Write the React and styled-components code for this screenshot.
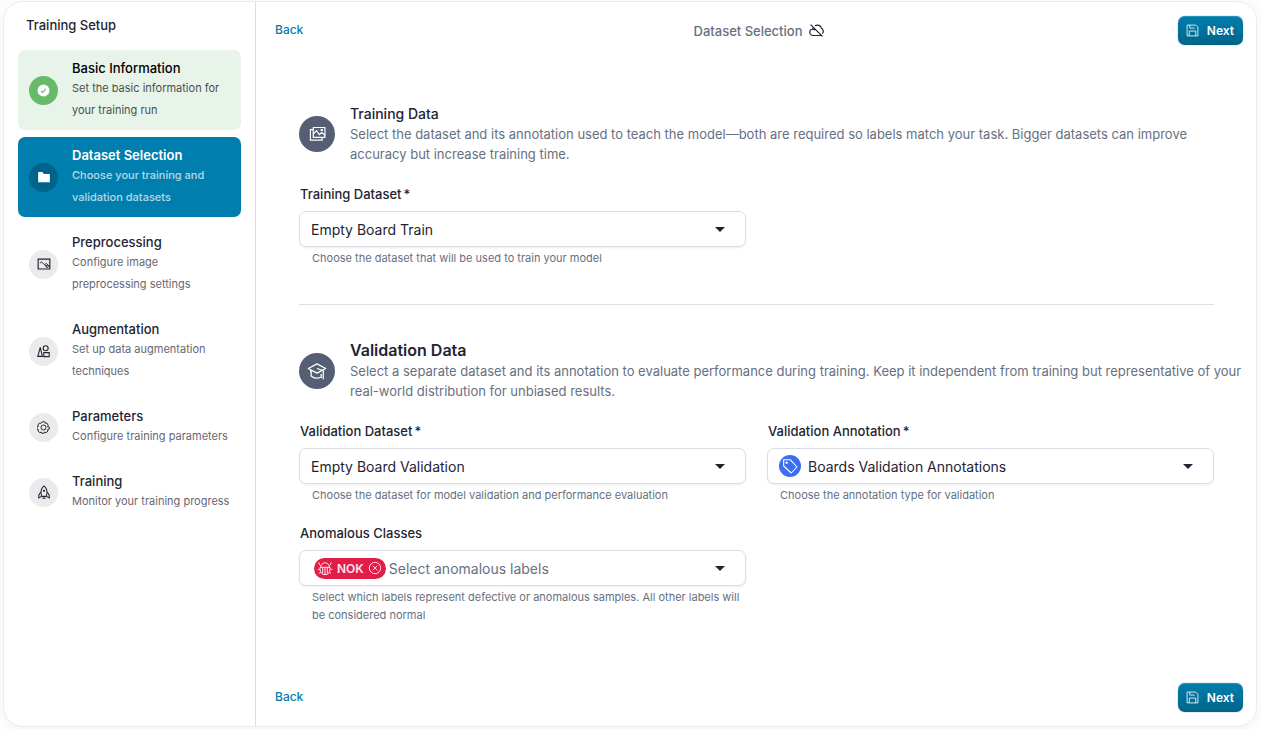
import React, { useState } from "react";
import styled, { createGlobalStyle, ThemeProvider } from "styled-components";

const theme = {
  primary: "#007ead",
  primaryDark: "#00648a",
  text: "#1e2433",
  textMuted: "#667080",
  slate: "#565e74",
  border: "#dcdde3",
  success: "#66bb6a",
  successBg: "#e8f4e9",
  danger: "#e11d48",
  info: "#3b6ff0",
};

const GlobalStyle = createGlobalStyle`
  *, *::before, *::after {
    box-sizing: border-box;
  }
  body {
    margin: 0;
    background: #fcfcfc;
    font-family: Inter, "Open Sans", sans-serif;
    color: ${theme.text};
  }
  button, select {
    font-family: inherit;
  }
`;

const Page = styled.div`
  display: flex;
  min-height: 100vh;
  padding: 1px 4px 2px 3px;
`;

const Card = styled.div`
  display: flex;
  flex: 1;
  overflow: hidden;
  background: #fff;
  border: 1px solid #ececee;
  border-radius: 20px;
  box-shadow: 0 2px 6px rgba(0, 0, 0, 0.03);
`;

const Sidebar = styled.aside`
  flex: 0 0 252px;
  padding: 12px 14px;
  border-right: 1px solid #dedede;
`;

const SidebarTitle = styled.h1`
  margin: 0 0 14px;
  padding: 0 8px;
  font-size: 13px;
  font-weight: 500;
  line-height: 22px;
`;

const StepList = styled.ol`
  display: flex;
  flex-direction: column;
  gap: 7px;
  margin: 0;
  padding: 0;
  list-style: none;
`;

const stepBg = { done: theme.successBg, active: theme.primary, todo: "transparent" };
const badgeBg = { done: theme.success, active: theme.primaryDark, todo: "#ebebeb" };

const StepButton = styled.button`
  display: flex;
  align-items: center;
  gap: 14px;
  width: 100%;
  padding: 9px 11px;
  border: 0;
  border-radius: 7px;
  background: ${({ $status }) => stepBg[$status]};
  color: ${({ $status }) =>
    $status === "active" ? "#fff" : $status === "done" ? "#000" : theme.text};
  text-align: left;
  cursor: pointer;
`;

const StepBadge = styled.span`
  display: flex;
  align-items: center;
  justify-content: center;
  flex: 0 0 29px;
  height: 29px;
  border-radius: 50%;
  background: ${({ $status }) => badgeBg[$status]};
  color: ${({ $status }) => ($status === "todo" ? theme.text : "#fff")};
`;

const StepText = styled.span`
  display: flex;
  flex-direction: column;
`;

const StepName = styled.span`
  font-size: 13px;
  font-weight: ${({ $status }) => ($status === "active" ? 600 : 500)};
  line-height: 18px;
`;

const StepDescription = styled.span`
  font-size: 11px;
  font-weight: ${({ $status }) => ($status === "active" ? 500 : 400)};
  line-height: 22px;
  opacity: 0.7;
`;

const Main = styled.main`
  display: flex;
  flex: 1;
  flex-direction: column;
  min-width: 0;
`;

const Toolbar = styled.div`
  display: grid;
  grid-template-columns: 1fr auto 1fr;
  align-items: center;
  padding: 14px 13px 14px 19px;
`;

const ToolbarTitle = styled.h2`
  display: flex;
  align-items: center;
  gap: 7px;
  margin: 0;
  font-size: 13px;
  font-weight: 500;
  color: ${theme.textMuted};

  svg {
    color: ${theme.text};
  }
`;

const BackButton = styled.button`
  justify-self: start;
  padding: 0 0 2px;
  border: 0;
  background: none;
  color: ${theme.primary};
  font-size: 12px;
  font-weight: 500;
  line-height: 22px;
  cursor: pointer;
`;

const NextButton = styled.button`
  display: flex;
  grid-column: 3;
  align-items: center;
  justify-self: end;
  gap: 8px;
  height: 29px;
  padding: 0 9px 1px 8px;
  border: 0;
  border-radius: 7px;
  background: linear-gradient(${theme.primary}, ${theme.primaryDark});
  box-shadow: inset 0 1px 0 rgba(255, 255, 255, 0.15), 0 0 1px ${theme.primaryDark};
  color: #fff;
  font-size: 12px;
  font-weight: 600;
  cursor: pointer;

  svg {
    opacity: 0.85;
  }
`;

const Content = styled.div`
  flex: 1;
  padding: 44px 42px 0 43px;
`;

const SectionHeader = styled.header`
  display: flex;
  align-items: center;
  gap: 15px;
`;

const SectionBadge = styled.span`
  display: flex;
  align-items: center;
  justify-content: center;
  flex: 0 0 36px;
  height: 36px;
  border-radius: 50%;
  background: ${theme.slate};
  color: #fff;
`;

const SectionTitle = styled.h3`
  margin: 0;
  font-size: ${({ $large }) => ($large ? 16 : 14)}px;
  font-weight: ${({ $large }) => ($large ? 600 : 500)};
  line-height: 21px;
`;

const SectionDescription = styled.p`
  margin: 0 -32px 0 0;
  font-size: 13px;
  line-height: 20px;
  color: ${theme.textMuted};
`;

const Divider = styled.hr`
  height: 1px;
  margin: 37px 0 35px;
  border: 0;
  background: #dfdfe1;
`;

const FieldGrid = styled.div`
  display: grid;
  grid-template-columns: 1fr 1fr;
  gap: 19px 21px;
  margin-top: 20px;
`;

const Field = styled.div`
  display: flex;
  flex-direction: column;
`;

const Label = styled.label`
  margin-bottom: 7px;
  padding-left: 1px;
  font-size: 13px;
  font-weight: 500;
  line-height: 20px;
`;

const Required = styled.span`
  margin-left: 2px;
`;

const Control = styled.div`
  display: flex;
  align-items: center;
  gap: ${({ $gap }) => $gap || 0}px;
  height: 36px;
  padding: 0 20px 0 ${({ $inset }) => $inset || 11}px;
  border: 1px solid ${theme.border};
  border-radius: 7px;
  background: #fff;
  box-shadow: 0 1px 2px rgba(30, 36, 51, 0.08);

  &:focus-within {
    border-color: ${theme.primary};
  }
`;

const Select = styled.select`
  flex: 1;
  min-width: 0;
  height: 100%;
  padding: 0;
  border: 0;
  outline: 0;
  appearance: none;
  background: transparent;
  color: ${({ $placeholder }) => ($placeholder ? theme.textMuted : theme.text)};
  font-size: 14px;
`;

const Helper = styled.p`
  margin: 2px 4px 0 13px;
  font-size: 11px;
  line-height: 18px;
  color: ${theme.textMuted};
`;

const TagBadge = styled.span`
  display: flex;
  align-items: center;
  justify-content: center;
  width: 22px;
  height: 22px;
  border-radius: 50%;
  background: ${theme.info};
  color: #fff;
`;

const Chip = styled.span`
  display: flex;
  align-items: center;
  gap: 4px;
  height: 21px;
  padding: 0 4px 0 3px;
  border-radius: 11px;
  background: ${theme.danger};
  color: #ffe4ea;
  font-size: 12px;
  font-weight: 600;
`;

const ChipRemove = styled.button`
  display: flex;
  padding: 0;
  border: 0;
  background: none;
  color: inherit;
  cursor: pointer;
`;

const Icon = ({ size = 14, width = 1.5, children }) => (
  <svg
    width={size}
    height={size}
    viewBox="0 0 24 24"
    fill="none"
    stroke="currentColor"
    strokeWidth={width}
    aria-hidden="true"
  >
    {children}
  </svg>
);

const CheckIcon = () => (
  <Icon size={13}>
    <circle cx="12" cy="12" r="11" fill="currentColor" stroke="none" />
    <path d="M7.5 12.5l3 3 6-6.5" stroke={theme.success} strokeWidth="2" />
  </Icon>
);

const FolderIcon = () => (
  <Icon size={14}>
    <path d="M2 3.5h7l3 3.5h10V21H2z" fill="currentColor" stroke="none" />
  </Icon>
);

const ImageIcon = () => (
  <Icon size={14} width={2}>
    <path d="M2 3.5h20v17H2z" />
    <path d="M5 10.500l3-2 9 8.500M13 13l3-2 6 6" strokeWidth="1.600" />
    <circle cx="17.500" cy="16" r="2" strokeWidth="1.600" />
  </Icon>
);

const ShapesIcon = () => (
  <Icon size={13} width={2}>
    <circle cx="16" cy="6" r="4.6" />
    <path d="M6 4.5L10 21H1.5zM12.500 14H22.500V21.500H12.500z" />
  </Icon>
);

const GearIcon = () => (
  <Icon size={13} width={1.8}>
    <circle cx="12" cy="12" r="4.6" />
    <path
      d="M9.500 1.500h5l.9 2.700 2.800-.4 2.500 4.200-1.500 2.200 3.300 1v3.800l-3.200 1.200.9 2.600-3.800 3-2.300-1.500-1.300 2.400h-3.600l-1.500-2.400-2.400 1.300-3.500-3.200.9-2.400-3-1.200v-3.800l3-1-1.200-2.400 2.800-3.800 2.800.6z"
      strokeLinejoin="round"
    />
  </Icon>
);

const RocketIcon = () => (
  <Icon size={14} width={1.8}>
    <path d="M8 19.500C5 13 7.500 5 12 1.500 16.500 5 19 13 16 19.500z" strokeLinejoin="round" />
    <path d="M6.500 12L3 17.500V22l5-2.500M17.500 12l3.500 5.500V22l-5-2.500M9.500 22.500h5" />
    <circle cx="12" cy="10" r="1" />
  </Icon>
);

const CloudOffIcon = () => (
  <Icon size={15} width={1.9}>
    <path d="M2.5 2.5l19 19M6.8 6.8C6 8 6 9 6 10c-3 0-4.800 2-4.800 4.500S3.200 20 6.500 20h13M9.500 4.500C14 2 19 4 20 8.500c3 1.500 3.800 5.500 1.500 8.500M6 10c1.500 0 2.600.5 3.500 1.400" />
  </Icon>
);

const SaveIcon = () => (
  <Icon size={13} width={1.8}>
    <path d="M2 2h16l4 4v16H2z" strokeLinejoin="round" />
    <path d="M7 2v5.500h9M6 22v-9h12v9" />
  </Icon>
);

const ImagesIcon = () => (
  <Icon size={17} width={1.7}>
    <path d="M6 3.500h16.500v14H6z" strokeLinejoin="round" />
    <path d="M6 6.500H2v14.800h16.500v-3.800M6 13l4.500-5 4 5.500 3.500-3 4.500 4" />
    <circle cx="18" cy="7" r="1" />
  </Icon>
);

const GraduationIcon = () => (
  <Icon size={20} width={1.5}>
    <path d="M12 3.5L1.5 9 12 14.5 22.5 9z" strokeLinejoin="round" />
    <path d="M5 11v7c3.500 3.300 9.500 3.300 12.500 1M12 9l7.500 2.500V22M17 15.500v5M4 10.500l1 4" />
  </Icon>
);

const TagIcon = () => (
  <Icon size={16} width={1.6}>
    <path d="M2.5 2.5h9.800L22.500 13.500l-8.700 9L2.500 12z" strokeLinejoin="round" />
    <circle cx="7" cy="7" r="1" />
  </Icon>
);

const BugIcon = () => (
  <Icon size={16} width={1.5}>
    <path d="M4.500 11h15v3c0 5-3.300 8-7.500 8s-7.500-3-7.500-8zM5.500 11C5.500 2 18.500 2 18.500 11M12 11v11M8.500 11v9M15.500 11v9" />
    <path d="M4.500 14H1M19.500 14H23M5.500 8.500L3 6V3.500M18.500 8.500L21 6V3.500M5.500 18L3 20.500M18.500 18l2.500 2.500" />
  </Icon>
);

const RemoveIcon = () => (
  <Icon size={14} width={1.6}>
    <circle cx="12" cy="12" r="9.8" />
    <path d="M8 8l8 8M16 8l-8 8" />
  </Icon>
);

const Caret = () => (
  <svg width="10" height="5" viewBox="0 0 10 5" aria-hidden="true">
    <path d="M0 0h10L5 5z" fill={theme.text} />
  </svg>
);

const steps = [
  { name: "Basic Information", description: "Set the basic information for your training run", status: "done", icon: CheckIcon },
  { name: "Dataset Selection", description: "Choose your training and validation datasets", status: "active", icon: FolderIcon },
  { name: "Preprocessing", description: "Configure image preprocessing settings", status: "todo", icon: ImageIcon },
  { name: "Augmentation", description: "Set up data augmentation techniques", status: "todo", icon: ShapesIcon },
  { name: "Parameters", description: "Configure training parameters", status: "todo", icon: GearIcon },
  { name: "Training", description: "Monitor your training progress", status: "todo", icon: RocketIcon },
];

const Next = () => (
  <NextButton type="button">
    <SaveIcon />
    Next
  </NextButton>
);

const SelectField = ({ id, label, required, helper, options, placeholder, before, gap, inset }) => (
  <Field>
    <Label htmlFor={id}>
      {label}
      {required && <Required>*</Required>}
    </Label>
    <Control $gap={gap} $inset={inset}>
      {before}
      <Select id={id} required={required} $placeholder={placeholder} aria-describedby={`${id}-help`}>
        {options.map((option) => (
          <option key={option}>{option}</option>
        ))}
      </Select>
      <Caret />
    </Control>
    <Helper id={`${id}-help`}>{helper}</Helper>
  </Field>
);

const App = () => {
  const [classes, setClasses] = useState(["NOK"]);

  return (
    <ThemeProvider theme={theme}>
      <GlobalStyle />
      <Page>
        <Card>
          <Sidebar>
            <SidebarTitle>Training Setup</SidebarTitle>
            <StepList>
              {steps.map(({ name, description, status, icon: StepIcon }) => (
                <li key={name}>
                  <StepButton type="button" $status={status} aria-current={status === "active" ? "step" : undefined}>
                    <StepBadge $status={status}>
                      <StepIcon />
                    </StepBadge>
                    <StepText>
                      <StepName $status={status}>{name}</StepName>
                      <StepDescription $status={status}>{description}</StepDescription>
                    </StepText>
                  </StepButton>
                </li>
              ))}
            </StepList>
          </Sidebar>

          <Main>
            <Toolbar>
              <BackButton type="button">Back</BackButton>
              <ToolbarTitle>
                Dataset Selection
                <CloudOffIcon />
              </ToolbarTitle>
              <Next />
            </Toolbar>

            <Content>
              <section>
                <SectionHeader>
                  <SectionBadge>
                    <ImagesIcon />
                  </SectionBadge>
                  <div>
                    <SectionTitle>Training Data</SectionTitle>
                    <SectionDescription>
                      Select the dataset and its annotation used to teach the model—both are required so
                      labels match your task. Bigger datasets can improve
                      <br />
                      accuracy but increase training time.
                    </SectionDescription>
                  </div>
                </SectionHeader>
                <FieldGrid>
                  <SelectField
                    id="training-dataset"
                    label="Training Dataset"
                    required
                    options={["Empty Board Train"]}
                    helper="Choose the dataset that will be used to train your model"
                  />
                </FieldGrid>
              </section>

              <Divider />

              <section>
                <SectionHeader>
                  <SectionBadge>
                    <GraduationIcon />
                  </SectionBadge>
                  <div>
                    <SectionTitle $large>Validation Data</SectionTitle>
                    <SectionDescription>
                      Select a separate dataset and its annotation to evaluate performance during training.
                      Keep it independent from training but representative of your
                      <br />
                      real-world distribution for unbiased results.
                    </SectionDescription>
                  </div>
                </SectionHeader>
                <FieldGrid>
                  <SelectField
                    id="validation-dataset"
                    label="Validation Dataset"
                    required
                    options={["Empty Board Validation"]}
                    helper="Choose the dataset for model validation and performance evaluation"
                  />
                  <SelectField
                    id="validation-annotation"
                    label="Validation Annotation"
                    required
                    options={["Boards Validation Annotations"]}
                    helper="Choose the annotation type for validation"
                    gap={7}
                    before={
                      <TagBadge>
                        <TagIcon />
                      </TagBadge>
                    }
                  />
                  <SelectField
                    id="anomalous-classes"
                    label="Anomalous Classes"
                    options={["Select anomalous labels"]}
                    placeholder
                    helper="Select which labels represent defective or anomalous samples. All other labels will be considered normal"
                    gap={3}
                    inset={14}
                    before={classes.map((name) => (
                      <Chip key={name}>
                        <BugIcon />
                        {name}
                        <ChipRemove
                          type="button"
                          aria-label={`Remove ${name}`}
                          onClick={() => setClasses(classes.filter((c) => c !== name))}
                        >
                          <RemoveIcon />
                        </ChipRemove>
                      </Chip>
                    ))}
                  />
                </FieldGrid>
              </section>
            </Content>

            <Toolbar>
              <BackButton type="button">Back</BackButton>
              <Next />
            </Toolbar>
          </Main>
        </Card>
      </Page>
    </ThemeProvider>
  );
};

export default App;
